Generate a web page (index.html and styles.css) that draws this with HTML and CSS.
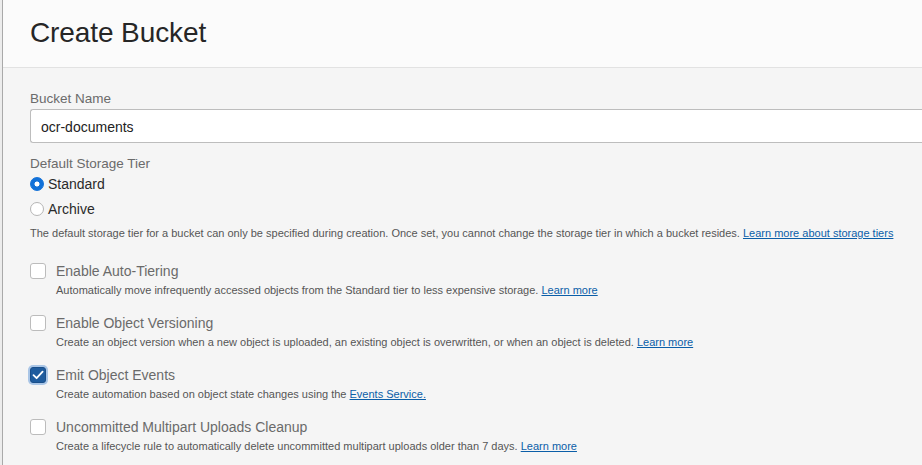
FILE: index.html
```html
<!DOCTYPE html>
<html lang="en">
<head>
<meta charset="utf-8">
<title>Create Bucket</title>
<link rel="stylesheet" href="styles.css">
</head>
<body>
<div class="edge"></div>
<div class="panel">
  <header class="panel-header">
    <h1 class="title">Create Bucket</h1>
  </header>
  <main class="panel-body">
    <label class="field-label" for="bname">Bucket Name</label>
    <input id="bname" class="text-input" type="text" value="ocr-documents">

    <div class="field-label tier-label">Default Storage Tier</div>
    <div class="radio-row">
      <span class="radio radio-on"></span><span class="radio-text">Standard</span>
    </div>
    <div class="radio-row archive">
      <span class="radio"></span><span class="radio-text">Archive</span>
    </div>
    <p class="help tier-help">The default storage tier for a bucket can only be specified during creation. Once set, you cannot change the storage tier in which a bucket resides. <a href="#" class="link">Learn more about storage tiers</a></p>

    <div class="option first">
      <span class="box"></span>
      <div class="option-text">
        <div class="option-label">Enable Auto-Tiering</div>
        <p class="help">Automatically move infrequently accessed objects from the Standard tier to less expensive storage. <a href="#" class="link">Learn more</a></p>
      </div>
    </div>
    <div class="option">
      <span class="box"></span>
      <div class="option-text">
        <div class="option-label">Enable Object Versioning</div>
        <p class="help">Create an object version when a new object is uploaded, an existing object is overwritten, or when an object is deleted. <a href="#" class="link">Learn more</a></p>
      </div>
    </div>
    <div class="option">
      <span class="box box-on">
        <svg width="12" height="10" viewBox="0 0 12 10"><path d="M1.5 5.2 L4.6 8.2 L10.6 1.6" fill="none" stroke="#fff" stroke-width="1.8" stroke-linecap="round" stroke-linejoin="round"/></svg>
      </span>
      <div class="option-text">
        <div class="option-label">Emit Object Events</div>
        <p class="help">Create automation based on object state changes using the <a href="#" class="link">Events Service.</a></p>
      </div>
    </div>
    <div class="option">
      <span class="box"></span>
      <div class="option-text">
        <div class="option-label">Uncommitted Multipart Uploads Cleanup</div>
        <p class="help">Create a lifecycle rule to automatically delete uncommitted multipart uploads older than 7 days. <a href="#" class="link">Learn more</a></p>
      </div>
    </div>
  </main>
</div>
</body>
</html>
```

FILE: styles.css
```css
* { box-sizing: border-box; }
html, body {
  margin: 0;
  padding: 0;
  width: 922px;
  height: 465px;
  overflow: hidden;
}
body {
  display: flex;
  font-family: "Liberation Sans", Arial, sans-serif;
  background: #f5f5f5;
}
.edge {
  flex: 0 0 2px;
  background: #ececec;
}
.panel {
  flex: 1 1 auto;
  min-width: 0;
  border-left: 1px solid #a9a9a9;
  background: #f5f5f5;
  min-height: 465px;
}
.panel-header {
  height: 68px;
  background: #fbfbfb;
  border-bottom: 1px solid #e2e2e2;
  padding: 17px 0 0 27px;
}
.title {
  margin: 0;
  font-weight: normal;
  font-size: 28px;
  line-height: 32px;
  color: #262626;
  letter-spacing: -0.1px;
}
.panel-body {
  padding: 23px 0 0 27px;
}
.field-label {
  display: block;
  font-size: 13.5px;
  line-height: 16px;
  color: #6b6b6b;
}
.text-input {
  display: block;
  margin-top: 2px;
  width: 100%;
  height: 34px;
  border: 1px solid #bdbdbd;
  border-right: none;
  border-radius: 3px 0 0 3px;
  background: #fff;
  padding: 1px 10px 0;
  font-family: inherit;
  font-size: 14px;
  color: #222;
  outline: none;
}
.tier-label { margin-top: 13px; }
.radio-row {
  display: flex;
  align-items: center;
  height: 18px;
  margin-top: 3px;
}
.radio-row.archive { margin-top: 7px; }
.radio {
  width: 14px;
  height: 14px;
  border-radius: 50%;
  border: 1px solid #b5b5b5;
  background: #fff;
  margin-right: 4px;
  flex: 0 0 14px;
}
.radio-on {
  border-color: #1271d8;
  background: radial-gradient(circle, #fff 0 2.2px, #1271d8 2.8px);
}
.radio-text {
  font-size: 14px;
  line-height: 18px;
  color: #2a2a2a;
}
.help {
  margin: 0;
  font-size: 11px;
  line-height: 14px;
  color: #555;
}
.tier-help { margin-top: 8px; }
.link {
  color: #0b5ea8;
  text-decoration: underline;
}
.option {
  display: flex;
  align-items: flex-start;
  margin-top: 17px;
}
.option.first { margin-top: 22px; }
.box {
  flex: 0 0 16px;
  width: 16px;
  height: 16px;
  margin-top: 1px;
  margin-right: 10px;
  border: 1px solid #bcbcbc;
  border-radius: 3px;
  background: #fff;
  display: flex;
  align-items: center;
  justify-content: center;
}
.box-on {
  background: #1f5c9e;
  border-color: #1a4f8a;
  box-shadow: 0 0 0 2px #a9c5e6;
}
.option-label {
  font-size: 14px;
  line-height: 18px;
  color: #6a6a6a;
}
.option-text .help { margin-top: 3px; }
```
